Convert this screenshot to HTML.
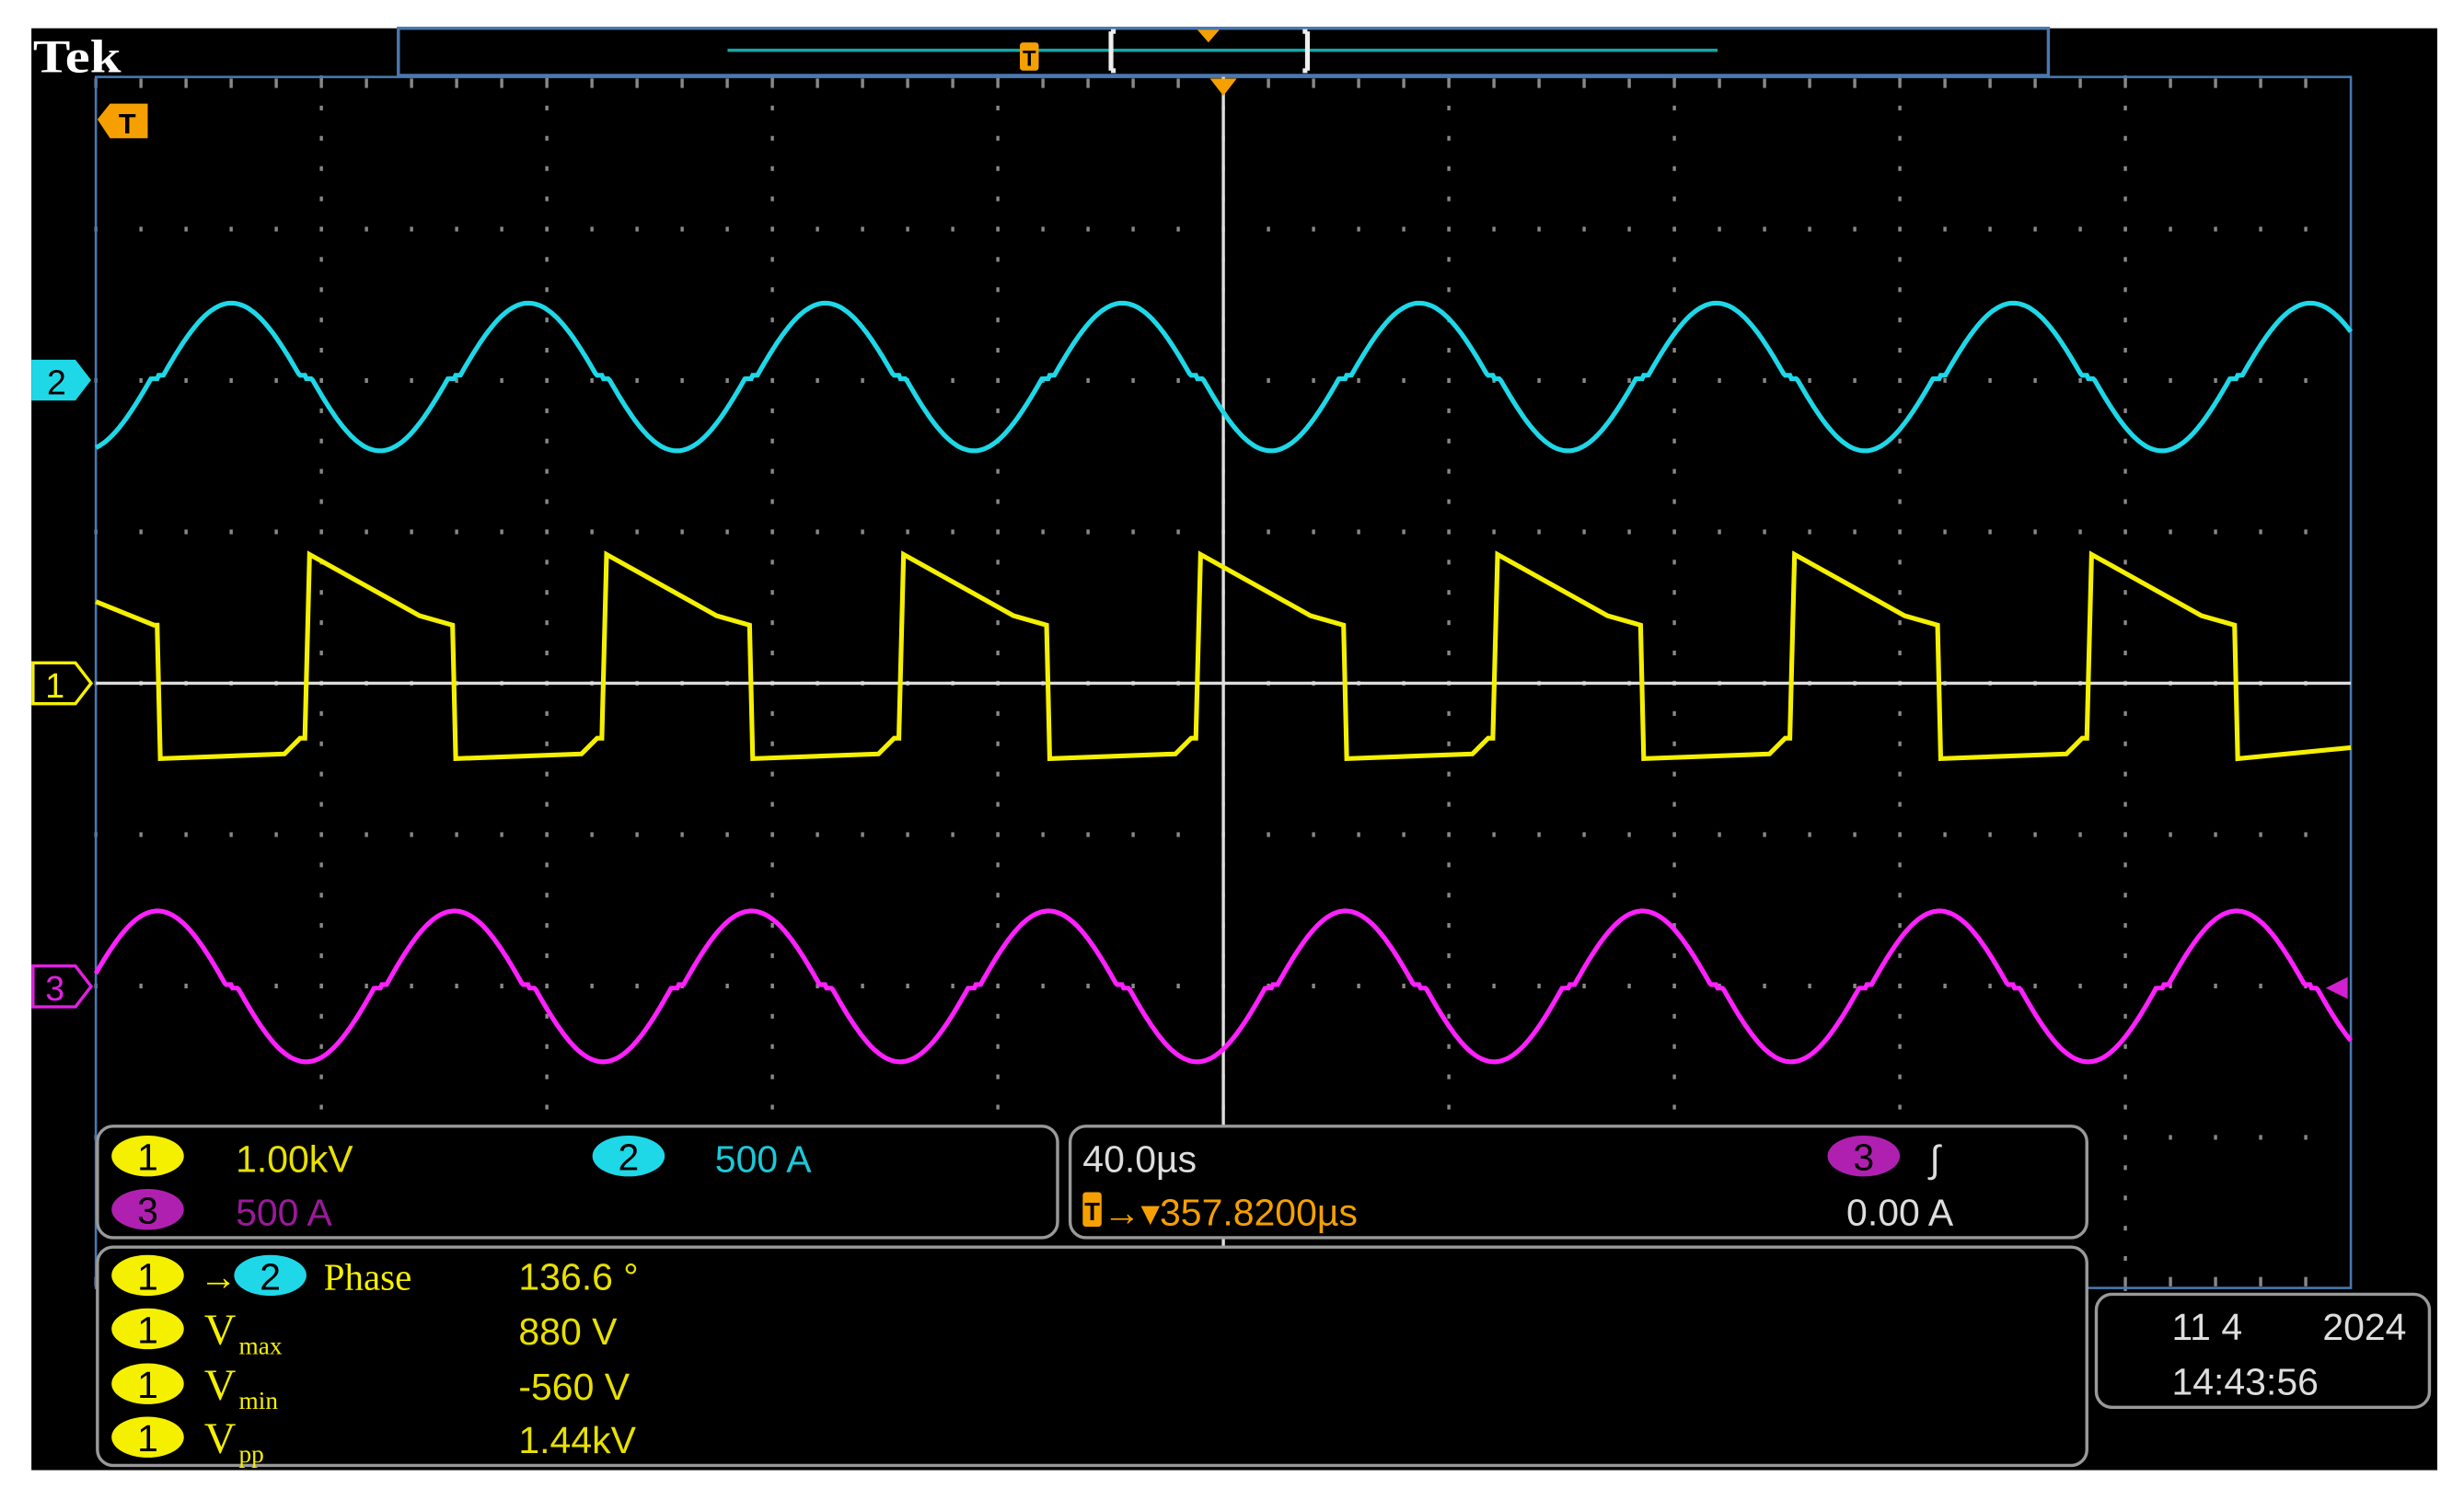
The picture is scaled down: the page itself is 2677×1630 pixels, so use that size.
<!DOCTYPE html>
<html><head><meta charset="utf-8"><style>
html,body{margin:0;padding:0;background:#fff;overflow:hidden}
svg{display:block}
text{font-family:"Liberation Sans Narrow","Liberation Sans",sans-serif}
</style></head><body>
<svg id="s" xmlns="http://www.w3.org/2000/svg" width="2677" height="1630" viewBox="0 0 1568 955" preserveAspectRatio="none">
<rect x="0" y="0" width="1568" height="955" fill="#fff"/>
<rect x="20" y="18" width="1531" height="918" fill="#000"/>
<text x="21" y="46" font-family="Liberation Serif" font-size="30" fill="#fff" font-weight="bold" textLength="56" lengthAdjust="spacingAndGlyphs" style="font-family:'Liberation Serif',serif">Tek</text>
<rect x="253.5" y="18" width="1050" height="30" fill="#000" stroke="#4a78b0" stroke-width="2"/>
<line x1="463" y1="32" x2="1093" y2="32" stroke="#13a8a8" stroke-width="2"/>
<rect x="649" y="27" width="12" height="18" rx="2" fill="#f5a000"/>
<text x="655" y="42" font-size="14" fill="#000" text-anchor="middle" font-weight="bold">T</text>
<path d="M707 20 v25 M707 20 h3 M707 45 h3 M832 20 v25 M832 20 h-3 M832 45 h-3" stroke="#eee" stroke-width="3" fill="none"/>
<path d="M762 19 h14 l-7 8z" fill="#f5a000"/>
<g id="grid"></g>
<rect x="61" y="49" width="1435" height="771" fill="none" stroke="#4a78b0" stroke-width="1.5"/>
<line x1="61" y1="435" x2="1496" y2="435" stroke="#ddd" stroke-width="2"/>
<line x1="778.5" y1="49" x2="778.5" y2="820" stroke="#ddd" stroke-width="2"/>
<path d="M770 50 h17 l-8.5 11z" fill="#f5a000"/>
<path d="M62 76 l8 -10 h24 v22 h-24z" fill="#f5a000"/>
<text x="81" y="85" font-size="18" fill="#000" text-anchor="middle" font-weight="bold">T</text>
<path id="cy" fill="none" stroke="#1ed8e8" stroke-width="3"/>
<path id="ye" fill="none" stroke="#f5f000" stroke-width="3"/>
<path id="ma" fill="none" stroke="#ff20ff" stroke-width="3"/>
<path d="M1494 622 l-14 7 l14 7z" fill="#d020d0"/>
<path d="M20 229 h28 l10 13 l-10 13 h-28z" fill="#1ed8e8"/>
<text x="36" y="251" font-size="22" fill="#000" text-anchor="middle">2</text>
<path d="M21 422 h27 l10 13 l-10 13 h-27z" fill="#000" stroke="#f5f000" stroke-width="2"/>
<text x="35" y="444" font-size="22" fill="#f5f000" text-anchor="middle">1</text>
<path d="M21 615 h27 l10 13 l-10 13 h-27z" fill="#000" stroke="#e020e0" stroke-width="2"/>
<text x="35" y="637" font-size="22" fill="#e020e0" text-anchor="middle">3</text>
<!-- panels -->
<g fill="#000" stroke="#999" stroke-width="2">
<rect x="62" y="717" width="611" height="71" rx="10"/>
<rect x="681" y="717" width="647" height="71" rx="10"/>
<rect x="62" y="794" width="1266" height="139" rx="10"/>
<rect x="1334" y="824" width="212" height="72" rx="10"/>
</g>
<g font-size="24">
<ellipse cx="94" cy="736" rx="23" ry="13" fill="#f5f000"/><text x="94" y="745" fill="#000" text-anchor="middle">1</text>
<text x="150" y="746" fill="#e8e000">1.00kV</text>
<ellipse cx="400" cy="736" rx="23" ry="13" fill="#1ed8e8"/><text x="400" y="745" fill="#000" text-anchor="middle">2</text>
<text x="455" y="746" fill="#1cc8d8">500 A</text>
<ellipse cx="94" cy="770" rx="23" ry="13" fill="#b020b0"/><text x="94" y="779" fill="#000" text-anchor="middle">3</text>
<text x="150" y="780" fill="#9a1a9a">500 A</text>
<text x="689" y="746" fill="#ddd">40.0µs</text>
<rect x="689" y="759" width="12" height="22" rx="2" fill="#f5a000"/><text x="695" y="777" font-size="16" fill="#000" text-anchor="middle" font-weight="bold">T</text>
<text x="702" y="780" fill="#f5a000">→▾357.8200µs</text>
<ellipse cx="1186" cy="736" rx="23" ry="13" fill="#b020b0"/><text x="1186" y="745" fill="#000" text-anchor="middle">3</text>
<text x="1228" y="746" fill="#ddd">∫</text>
<text x="1175" y="780" fill="#ddd">0.00 A</text>
<ellipse cx="94" cy="812" rx="23" ry="13" fill="#f5f000"/><text x="94" y="821" fill="#000" text-anchor="middle">1</text>
<text x="127" y="821" fill="#f5f000">→</text>
<ellipse cx="172" cy="812" rx="23" ry="13" fill="#1ed8e8"/><text x="172" y="821" fill="#000" text-anchor="middle">2</text>
<text x="206" y="821" fill="#f5f000" style="font-family:'Liberation Serif',serif">Phase</text>
<text x="330" y="821" fill="#e8e000">136.6 °</text>
<ellipse cx="94" cy="846" rx="23" ry="13" fill="#f5f000"/><text x="94" y="855" fill="#000" text-anchor="middle">1</text>
<text x="130" y="856" fill="#f5f000" font-size="28" style="font-family:'Liberation Serif',serif">V</text><text x="152" y="862" fill="#f5f000" font-size="16" style="font-family:'Liberation Serif',serif">max</text>
<text x="330" y="856" fill="#e8e000">880 V</text>
<ellipse cx="94" cy="881" rx="23" ry="13" fill="#f5f000"/><text x="94" y="890" fill="#000" text-anchor="middle">1</text>
<text x="130" y="891" fill="#f5f000" font-size="28" style="font-family:'Liberation Serif',serif">V</text><text x="152" y="897" fill="#f5f000" font-size="16" style="font-family:'Liberation Serif',serif">min</text>
<text x="330" y="891" fill="#e8e000">-560 V</text>
<ellipse cx="94" cy="915" rx="23" ry="13" fill="#f5f000"/><text x="94" y="924" fill="#000" text-anchor="middle">1</text>
<text x="130" y="925" fill="#f5f000" font-size="28" style="font-family:'Liberation Serif',serif">V</text><text x="152" y="931" fill="#f5f000" font-size="16" style="font-family:'Liberation Serif',serif">pp</text>
<text x="330" y="925" fill="#e8e000">1.44kV</text>
<text x="1382" y="853" fill="#ddd">11 4</text><text x="1478" y="853" fill="#ddd">2024</text>
<text x="1382" y="888" fill="#ddd">14:43:56</text>
</g>
</svg>
<script>
(function(){
var NS="http://www.w3.org/2000/svg",g=document.getElementById('grid'),h='';
var x0=61,x1=1496,y0=49,y1=820,dx=143.5,dy=96.375;
for(var i=1;i<10;i++){var x=x0+i*dx;for(var y=y0;y<=y1;y+=dy/5)h+='<rect x="'+(x-1)+'" y="'+(y-1)+'" width="2" height="3" fill="#888"/>';}
for(var j=1;j<8;j++){var y=y0+j*dy;for(var x=x0;x<=x1;x+=dx/5)h+='<rect x="'+(x-1)+'" y="'+(y-1)+'" width="2" height="3" fill="#888"/>';}
for(var x=x0;x<=x1;x+=dx/5){h+='<rect x="'+(x-1)+'" y="50" width="2" height="6" fill="#888"/><rect x="'+(x-1)+'" y="813" width="2" height="6" fill="#888"/>';}
g.innerHTML=h;
var P=189;
function sinw(x,c,a,ph){var t=2*Math.PI*(x-ph)/P,s=Math.sin(t);if(Math.abs(s)<0.13)s=(s>0?0.02:-0.02);else s=s-(s>0?0.11:-0.11);return c-a*s/0.89;}
var c='',m='',y='';
for(var x=61;x<=1496;x+=1){c+=(x==61?'M':'L')+x+' '+sinw(x,240,47,100).toFixed(1);m+=(x==61?'M':'L')+x+' '+sinw(x,628,48,53).toFixed(1);}
document.getElementById('cy').setAttribute('d',c);
document.getElementById('ma').setAttribute('d',m);
// yellow
var d='M61 383 L98 398 L100 398 L102 483';
for(var k=0;k<8;k++){var r=197+k*P,f=r+93;
 d+=' L'+(r-16)+' 480 L'+(r-6)+' 470 L'+(r-3)+' 470 L'+r+' 353';
 if(f>1496){d+=' L1496 '+(353+(1496-r)*0.5).toFixed(0);break;}
 d+=' L'+(r+70)+' 392 L'+(f-2)+' 398 L'+f+' 483';
 if(f+90>1496){d+=' L1496 476';break;}
}
document.getElementById('ye').setAttribute('d',d);
})();
</script>
</body></html>
